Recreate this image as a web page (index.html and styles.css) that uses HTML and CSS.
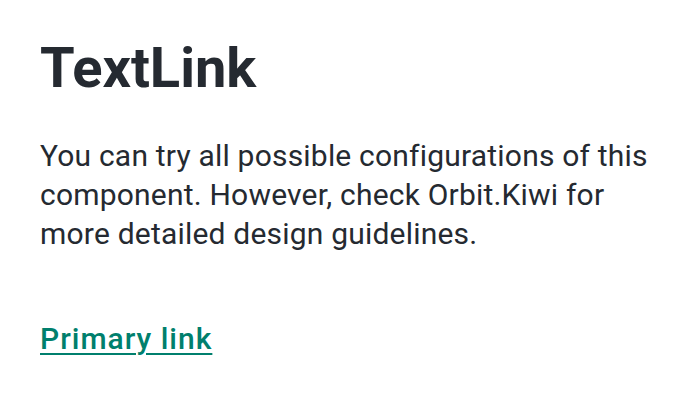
FILE: index.html
```html
<!DOCTYPE html>
<html lang="en">
<head>
<meta charset="utf-8">
<link rel="stylesheet" href="styles.css">
<title>TextLink</title>
</head>
<body>
<main class="page">
  <h1 class="title">TextLink</h1>
  <p class="desc">You can try all possible configurations of this component. However, check Orbit.Kiwi for more detailed design guidelines.</p>
  <div class="demo"><a class="link" href="#">Primary link</a></div>
</main>
</body>
</html>
```

FILE: styles.css
```css
html, body {
  margin: 0;
  padding: 0;
  background: #ffffff;
}
.page {
  font-family: Roboto, "Liberation Sans", sans-serif;
  color: #252a31;
  padding: 35px 20px 0 40px;
  display: flex;
  flex-direction: column;
  align-items: flex-start;
}
.title {
  margin: 0;
  font-size: 56px;
  line-height: 67px;
  font-weight: 700;
}
.desc {
  margin: 34px 0 0;
  font-size: 30px;
  line-height: 39px;
  font-weight: 400;
  letter-spacing: 0.2px;
  max-width: 620px;
}
.demo {
  margin-top: 66px;
  font-size: 30px;
  line-height: 39px;
}
.link {
  color: #007f6d;
  font-weight: 500;
  letter-spacing: 1px;
  text-decoration: underline;
  text-decoration-thickness: 2px;
  text-underline-offset: 4px;
}
```
